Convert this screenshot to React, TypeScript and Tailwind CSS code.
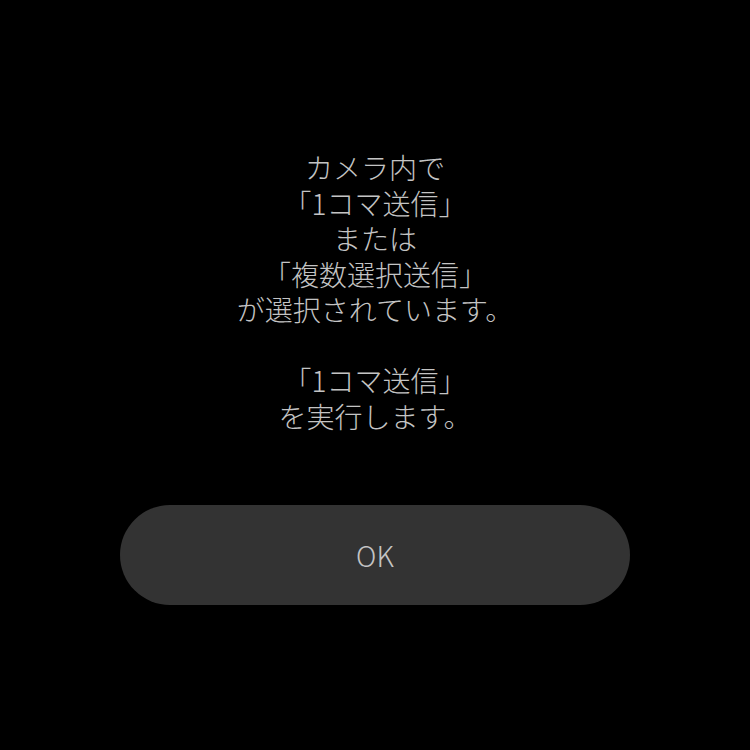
const lines = [
  "カメラ内で",
  "「1コマ送信」",
  "または",
  "「複数選択送信」",
  "が選択されています。",
  "",
  "「1コマ送信」",
  "を実行します。",
];

export default function App() {
  return (
    <div
      className="w-[750px] h-[750px] bg-black flex flex-col items-center pt-[150px]"
      style={{ fontFamily: '"Noto Sans CJK JP", "Noto Sans", sans-serif' }}
    >
      <div className="flex flex-col items-center text-[28px] leading-[35.5px] text-[#c4c4c4] font-light">
        {lines.map((line, i) => (
          <p key={i} className="h-[35.5px] whitespace-pre">
            {line}
          </p>
        ))}
      </div>
      <button className="mt-[71px] w-[510px] h-[100px] rounded-full bg-[#333333] text-[#c4c4c4] text-[28px] font-light">
        OK
      </button>
    </div>
  );
}
